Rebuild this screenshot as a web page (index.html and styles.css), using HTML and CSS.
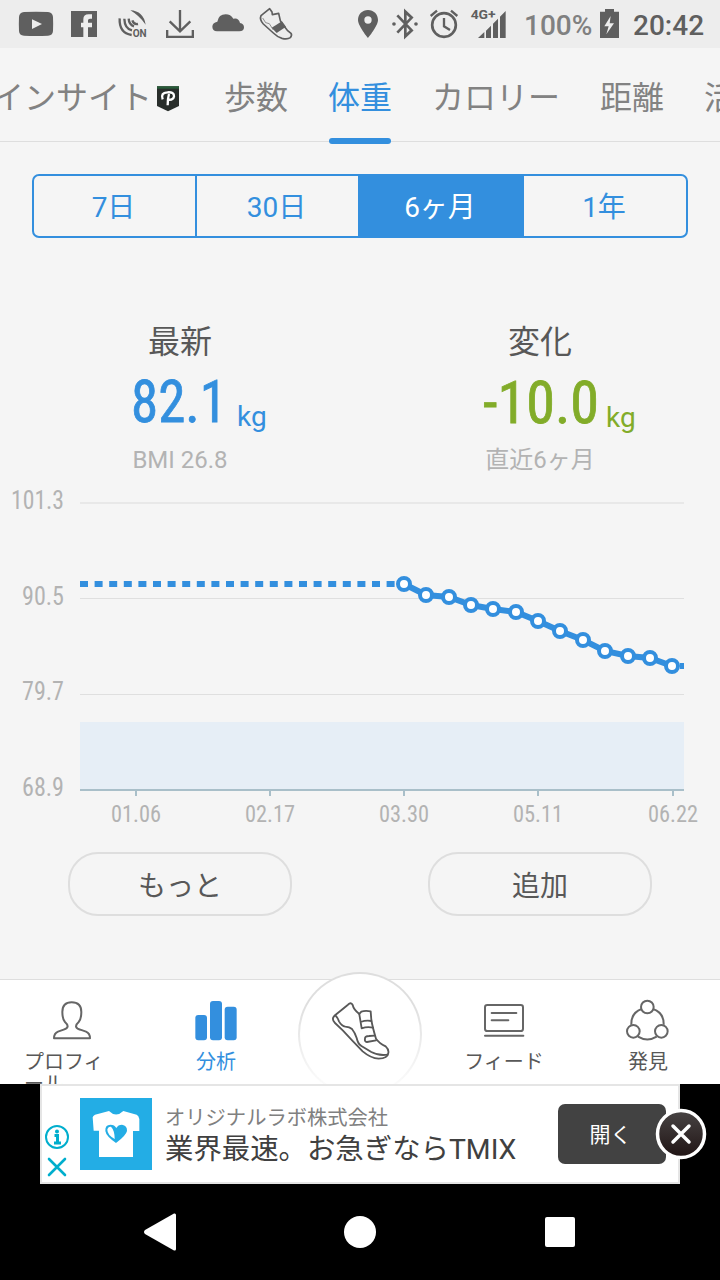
FILE: index.html
```html
<!DOCTYPE html>
<html lang="ja">
<head>
    <meta charset="UTF-8">
    <meta name="viewport" content="width=device-width, initial-scale=1.0">
    <title>体重</title>
    <link rel="stylesheet" href="styles.css">
</head>
<body>
    <!-- ステータスバー -->
    <header class="status">
        <svg class="ic" width="48" height="48" viewBox="36 0 144 144">
            <path d="M72 36Q108 34 144 36Q158 37 159 51Q160 72 159 93Q158 107 144 107Q108 109 72 107Q58 107 57 93Q56 72 57 51Q58 37 72 36Z"/>
            <path d="M96 58L126 72L96 87Z" fill="#ededed"/>
        </svg>
        <svg class="ic" width="48" height="48" viewBox="180 0 144 144">
            <path d="M213 33H291V111H264V82H276V68H264V61Q264 56 270 56H276V43H266Q250 43 250 58V68H243V82H250V111H213Z"/>
        </svg>
        <svg class="ic" width="48" height="48" viewBox="324 0 144 144">
            <path d="M391 31Q430 33 437 74Q418 47 391 31Z"/>
            <g fill="none" stroke="#5f5f5f" stroke-width="7">
                <path d="M359 55Q357 99 395 105"/>
                <path d="M373 56Q374 86 396 91"/>
                <path d="M386 56Q387 74 402 79"/>
                <path d="M397 61Q402 75 414 72"/>
            </g>
            <text x="398" y="111" font-size="33" font-weight="700" textLength="42" lengthAdjust="spacingAndGlyphs">ON</text>
        </svg>
        <svg class="ic" width="48" height="48" viewBox="468 0 144 144">
            <path d="M498 90H505V107H575V90H582V114H498Z"/>
            <path d="M540 30V92M509 64L540 94L571 64" fill="none" stroke="#5f5f5f" stroke-width="7"/>
        </svg>
        <svg class="ic" width="48" height="48" viewBox="612 0 144 144">
            <path d="M651 94Q637 92 637 80Q637 68 652 65Q656 43 677 43Q692 43 700 56Q716 52 720 69Q732 71 732 82Q732 94 718 94Z"/>
        </svg>
        <svg class="ic" width="48" height="48" viewBox="756 0 144 144">
            <path d="M783 47L809 26L816 36L817 44L836 40L841 62L849 74L862 91L873 100Q877 106 871 113Q862 119 846 115Q832 111 820 99L790 72Q778 59 783 47Z" fill="none" stroke="#5f5f5f" stroke-width="5" stroke-linejoin="round"/>
            <path d="M788 54L797 68L808 71L820 90" fill="none" stroke="#5f5f5f" stroke-width="2"/>
            <path d="M815 83L846 64L858 80L830 99Z"/>
        </svg>
        <svg class="ic first" width="36" height="48" viewBox="-30 0 108 144">
            <path fill-rule="evenodd" d="M24 30C41 30 54 43 54 60C54 78 24 114 24 114C24 114 -6 78 -6 60C-6 43 7 30 24 30ZM24 49A11 11 0 1 0 24 71A11 11 0 1 0 24 49Z"/>
        </svg>
        <svg class="ic" width="40" height="48" viewBox="78 0 120 144">
            <path d="M112 46L155 91L136 109V35L155 53L112 98" fill="none" stroke="#5f5f5f" stroke-width="8"/>
            <circle cx="102" cy="72" r="5.500"/><circle cx="168" cy="72" r="5.500"/>
        </svg>
        <svg class="ic" width="38" height="48" viewBox="198 0 114 144">
            <circle cx="252" cy="75" r="35.500" fill="none" stroke="#5f5f5f" stroke-width="8"/>
            <path d="M252 54V79L270 90M212 48L231 32M292 48L273 32" fill="none" stroke="#5f5f5f" stroke-width="7"/>
        </svg>
        <svg class="ic" width="48" height="48" viewBox="312 0 144 144">
            <path d="M354 114L373 96V114ZM378 92L393 77V114H378ZM399 71L414 56V114H399ZM420 50L437 33V114H420Z"/>
            <text x="332" y="57" font-size="41" font-weight="700" textLength="75" lengthAdjust="spacingAndGlyphs">4G+</text>
        </svg>
        <span class="percent">100%</span>
        <svg class="ic" width="20" height="48" viewBox="720 0 60 144">
            <path d="M735 27H762V35H777V114H720V35H735Z"/>
            <path d="M752 48L733 79H746L739 103L762 70H749Z" fill="#ededed"/>
        </svg>
        <span class="time">20:42</span>
    </header>

    <!-- タブ -->
    <nav class="tabs">
        <span class="tab">インサイト<svg class="badge" width="32" height="32" viewBox="456 245 96 96"><path d="M471 258H537V317L504 333L471 317Z" fill="#292e2b"/><path d="M471 258H537V265H471Z" fill="#285c39"/><path d="M488 297Q481 277 502 276Q523 274 522 288Q520 300 504 298M507 281Q503 294 503 315" fill="none" stroke="#fff" stroke-width="7"/></svg></span>
        <span class="tab">歩数</span>
        <span class="tab active">体重</span>
        <span class="tab">カロリー</span>
        <span class="tab">距離</span>
        <span class="tab">活動</span>
    </nav>

    <main>
        <div class="segment">
            <button>7日</button>
            <button>30日</button>
            <button class="on">6ヶ月</button>
            <button>1年</button>
        </div>

        <section class="stats">
            <div class="stat">
                <h2>最新</h2>
                <svg class="value blue" width="360" height="72" viewBox="0 0 360 72">
                    <text class="num" x="131" y="55" textLength="96" lengthAdjust="spacingAndGlyphs">82.1</text>
                    <text class="unit" x="237" y="59">kg</text>
                </svg>
                <p>BMI 26.8</p>
            </div>
            <div class="stat">
                <h2>変化</h2>
                <svg class="value green" width="360" height="72" viewBox="0 0 360 72">
                    <text class="num" x="123" y="56" textLength="116" lengthAdjust="spacingAndGlyphs">-10.0</text>
                    <text class="unit" x="246" y="60">kg</text>
                </svg>
                <p>直近6ヶ月</p>
            </div>
        </section>

        <!-- 体重グラフ -->
        <svg class="chart" width="720" height="350" viewBox="0 0 720 350">
            <rect x="80" y="242" width="604" height="67" fill="#e6eef6"/>
            <rect x="80" y="22" width="604" height="2" fill="#e8e8e8"/>
            <rect x="80" y="118" width="604" height="1" fill="#dfdfdf"/>
            <rect x="80" y="214" width="604" height="1" fill="#dfdfdf"/>
            <path d="M80 310H684M136 311V316M270 311V316M404 311V316M538 311V316M673 311V316" stroke="#a9bfc9" stroke-width="2"/>
            <g class="ylabel">
                <text x="11" y="29" textLength="53" lengthAdjust="spacingAndGlyphs">101.3</text>
                <text x="22" y="125" textLength="42" lengthAdjust="spacingAndGlyphs">90.5</text>
                <text x="22" y="220" textLength="42" lengthAdjust="spacingAndGlyphs">79.7</text>
                <text x="22" y="316" textLength="42" lengthAdjust="spacingAndGlyphs">68.9</text>
            </g>
            <g class="xlabel">
                <text x="111" y="342" textLength="50" lengthAdjust="spacingAndGlyphs">01.06</text>
                <text x="245" y="342" textLength="50" lengthAdjust="spacingAndGlyphs">02.17</text>
                <text x="379" y="342" textLength="50" lengthAdjust="spacingAndGlyphs">03.30</text>
                <text x="513" y="342" textLength="50" lengthAdjust="spacingAndGlyphs">05.11</text>
                <text x="648" y="342" textLength="50" lengthAdjust="spacingAndGlyphs">06.22</text>
            </g>
            <g class="line">
                <path d="M80 104H400" stroke-dasharray="8 6.6"/>
                <path d="M680 186H684"/>
                <polyline points="404,104 426,115 449,117 471,125 493,129 516,132 538,141 560,151 583,160 605,171 628,176 650,178 672,186"/>
            </g>
            <g class="dots">
                <circle cx="404" cy="104" r="6"/>
                <circle cx="426" cy="115" r="6"/>
                <circle cx="449" cy="117" r="6"/>
                <circle cx="471" cy="125" r="6"/>
                <circle cx="493" cy="129" r="6"/>
                <circle cx="516" cy="132" r="6"/>
                <circle cx="538" cy="141" r="6"/>
                <circle cx="560" cy="151" r="6"/>
                <circle cx="583" cy="160" r="6"/>
                <circle cx="605" cy="171" r="6"/>
                <circle cx="628" cy="176" r="6"/>
                <circle cx="650" cy="178" r="6"/>
                <circle cx="672" cy="186" r="6"/>
            </g>
        </svg>

        <div class="actions">
            <button>もっと</button>
            <button>追加</button>
        </div>
    </main>

    <!-- 下部メニュー -->
    <nav class="menu">
        <div class="item">
            <svg width="48" height="48" viewBox="144 82 144 144" fill="none" stroke="#666" stroke-width="6" stroke-linejoin="round">
                <path d="M203 170Q203 164 195 157Q187 148 187 127Q187 98 215 98Q244 98 244 127Q244 148 236 157Q228 164 228 170Q229 177 241 180L258 186Q270 191 270 206H162Q162 191 174 186L191 180Q203 176 203 170Z"/>
            </svg>
            <span>プロフィール</span>
        </div>
        <div class="item active">
            <svg width="48" height="48" viewBox="576 82 144 144" fill="#338fde">
                <rect x="586" y="136" width="35" height="76" rx="9"/>
                <rect x="630" y="94" width="36" height="118" rx="9"/>
                <rect x="674" y="111" width="36" height="101" rx="9"/>
            </svg>
            <span>分析</span>
        </div>
        <div class="item">
            <div class="start">
                <svg width="62" height="62" viewBox="120 105 186 186" fill="none" stroke="#585858" stroke-width="5.500" stroke-linejoin="round" stroke-linecap="round">
                    <path d="M139 150L177 119Q186 110 191 120Q194 134 211 147L217 140Q228 136 245 139L247 165Q251 188 261 221Q270 234 290 244Q300 253 298 264Q296 280 269 281Q246 280 221 259L190 227L162 197L138 174Q125 161 139 150Z"/>
                    <path d="M139 151Q146 158 150 169Q158 183 169 185Q182 186 189 192Q198 203 203 219Q207 237 216 242L247 261Q268 273 296 269"/>
                    <path d="M211 148L218 190Q235 184 252 188M215 171Q231 165 247 168M261 226Q245 229 234 231Q226 229 228 222Q227 213 240 213L257 212"/>
                </svg>
            </div>
        </div>
        <div class="item">
            <svg width="48" height="48" viewBox="150 82 144 144" fill="none" stroke="#666" stroke-width="6" stroke-linecap="round">
                <rect x="165" y="106" width="114" height="78" rx="7"/>
                <path d="M185 130H259M185 152H235M165 198H280"/>
            </svg>
            <span>フィード</span>
        </div>
        <div class="item">
            <svg width="48" height="48" viewBox="582 82 144 144" fill="none" stroke="#666" stroke-width="6">
                <circle cx="652" cy="112" r="19"/>
                <circle cx="610" cy="185" r="19"/>
                <circle cx="694" cy="185" r="19"/>
                <path d="M635 118Q603 129 604 165M669 118Q702 129 701 165M624 201Q652 218 680 201"/>
            </svg>
            <span>発見</span>
        </div>
    </nav>

    <!-- 広告 -->
    <aside class="ad">
        <div class="adbox">
            <div class="adchoice">
                <svg width="26" height="56" viewBox="0 0 26 56" fill="none" stroke="#00aecd" stroke-width="2">
                    <circle cx="13" cy="13" r="11"/>
                    <path d="M10.500 11.500H13.500V19M10 19H17" stroke-width="3"/>
                    <circle cx="13" cy="7.500" r="1"/>
                    <path d="M5 35L21 51M21 35L5 51" stroke-width="2.600" stroke-linecap="round"/>
                </svg>
            </div>
            <svg class="logo" width="72" height="72" viewBox="150 54 216 216">
                <rect x="150" y="54" width="216" height="216" fill="#23ade5"/>
                <path d="M237 93Q258 114 280 93L320 104Q326 107 328 117V153H309V231H207V152H191L188 112Q189 107 195 104Z" fill="#fff"/>
                <path d="M258 189Q228 168 226 153Q225 134 241 134Q254 134 259 144Q264 134 276 134Q292 136 291 153Q288 167 258 189Z" fill="#23ade5"/>
                <path d="M254 177Q232 164 232 149Q234 139 243 140Q254 151 254 177Z" fill="#fff"/>
            </svg>
            <div class="adtext">
                <small>オリジナルラボ株式会社</small>
                <strong>業界最速。お急ぎならTMIX</strong>
            </div>
            <button class="open">開く</button>
            <svg class="close" width="56" height="56" viewBox="0 0 56 56">
                <defs>
                    <linearGradient id="cg" x1="0" y1="0" x2="0" y2="1">
                        <stop offset="0" stop-color="#484444"/>
                        <stop offset="1" stop-color="#201414"/>
                    </linearGradient>
                </defs>
                <circle cx="28" cy="28" r="23.500" fill="url(#cg)" stroke="#fff" stroke-width="3.500"/>
                <path d="M20 20L36 36M36 20L20 36" stroke="#fff" stroke-width="3.500" stroke-linecap="round"/>
            </svg>
        </div>
    </aside>

    <!-- ナビゲーションバー -->
    <footer class="softkeys">
        <svg width="40" height="40" viewBox="0 0 40 40" fill="#fff"><path d="M5 18L34 1.500Q36 1 36 3V37Q36 39 34 38.500L5 22Q3 20 5 18Z"/></svg>
        <svg width="40" height="40" viewBox="0 0 40 40" fill="#fff"><circle cx="20" cy="20" r="16"/></svg>
        <svg width="40" height="40" viewBox="0 0 40 40" fill="#fff"><rect x="5" y="5" width="30" height="30" rx="2"/></svg>
    </footer>
</body>
</html>
```

FILE: styles.css
```css
* {
    box-sizing: border-box;
}
body {
    margin: 0;
    width: 720px;
    height: 1280px;
    overflow: hidden;
    display: flex;
    flex-direction: column;
    background-color: #f5f5f5;
    color: #585858;
    font-family: Roboto, "Noto Sans CJK JP", sans-serif;
}
svg {
    display: block;
    flex: none;
}
button {
    padding: 0;
    background: none;
    font-family: inherit;
    color: inherit;
}
.status {
    display: flex;
    align-items: center;
    height: 48px;
    padding-left: 12px;
    background-color: #ededed;
    color: #5f5f5f;
    white-space: nowrap;
}
.ic {
    fill: #5f5f5f;
}
.ic.first {
    margin-left: 50px;
}
.percent {
    width: 88px;
    padding: 3px 0 0 12px;
    font-size: 28px;
    color: #808080;
    font-weight: 500;
}
.time {
    padding: 3px 0 0 13px;
    font-size: 28px;
    font-weight: 500;
}
.tabs {
    display: flex;
    gap: 40px;
    height: 94px;
    padding-top: 27px;
    border-bottom: 1px solid #dedede;
    font-size: 32px;
    line-height: 46px;
    color: #828282;
    white-space: nowrap;
}
.tab {
    display: flex;
    align-items: center;
    height: 46px;
    flex: none;
}
.tab:first-child {
    margin-left: -8px;
}
.tab.active {
    position: relative;
    color: #338fde;
}
.tab.active::after {
    content: "";
    position: absolute;
    left: 1px;
    right: 1px;
    top: 63px;
    height: 6px;
    border-radius: 3px;
    background-color: #338fde;
}
.segment {
    display: grid;
    grid-template-columns: 161px 163px 164px 164px;
    height: 64px;
    margin: 32px 32px 0;
    border: 2px solid #338fde;
    border-radius: 7px;
    overflow: hidden;
}
.segment button {
    padding: 0 2px 2px 0;
    border: none;
    border-left: 2px solid #338fde;
    font-size: 28px;
    color: #338fde;
}
.segment button:first-child {
    border-left: none;
}
.segment .on {
    background-color: #338fde;
    color: #fff;
}
.stats {
    display: flex;
    height: 242px;
    padding-top: 81px;
}
.stat {
    width: 360px;
    text-align: center;
}
.stat h2 {
    margin: 0;
    font-size: 32px;
    line-height: 46px;
    font-weight: 400;
}
.stat p {
    width: 360px;
    margin: 5px 0 0;
    font-size: 24px;
    line-height: 33px;
    color: #b3b3b3;
}
.value {
    margin-top: 2px;
}
.blue {
    fill: #338fde;
    stroke: #338fde;
}
.green {
    fill: #82ac29;
    stroke: #82ac29;
}
.num {
    font-family: "Roboto Condensed", Roboto, sans-serif;
    font-size: 60px;
    stroke-width: 0.8;
}
.unit {
    font-size: 28px;
    stroke: none;
}
.ylabel, .xlabel {
    font-family: "Roboto Condensed", Roboto, sans-serif;
    fill: #b3b3b3;
}
.ylabel {
    font-size: 26px;
}
.xlabel {
    font-size: 24px;
}
.line {
    fill: none;
    stroke: #338fde;
    stroke-width: 6;
}
.dots {
    fill: #fff;
    stroke: #338fde;
    stroke-width: 4;
}
.actions {
    display: flex;
    justify-content: space-between;
    padding: 22px 68px 0;
}
.actions button {
    width: 224px;
    height: 64px;
    border: 2px solid #dedede;
    border-radius: 30px;
    font-size: 28px;
}
.menu {
    display: grid;
    grid-template-columns: repeat(5, 144px);
    height: 105px;
    margin-top: 63px;
    border-top: 1px solid #dedede;
    background-color: #fff;
}
.item {
    display: flex;
    flex-direction: column;
    align-items: center;
    height: 104px;
    padding-top: 17px;
    font-size: 20px;
    line-height: 22px;
}
.item span {
    max-width: 96px;
    margin-top: 6px;
    line-break: anywhere;
}
.item.active {
    color: #338fde;
}
/* 円の枠線は下に向かって薄くなる */
.start {
    width: 124px;
    height: 124px;
    flex: none;
    margin-top: -25px;
    padding: 26px 0 0 29px;
    border: 2px solid transparent;
    border-radius: 50%;
    background: linear-gradient(#fff, #fff) padding-box, linear-gradient(#dedede 25%, #fff 100%) border-box;
}
.ad {
    position: relative;
    height: 100px;
    padding: 0 40px;
    background-color: #000;
}
.adbox {
    display: flex;
    height: 100px;
    border: 2px solid #e5e5e5;
    background-color: #fff;
}
.adchoice {
    width: 38px;
    padding: 38px 0 0 2px;
}
.logo {
    margin-top: 12px;
}
.adtext {
    width: 406px;
    padding: 18px 0 0 13px;
    white-space: nowrap;
}
.adtext small {
    display: block;
    font-size: 20.3px;
    line-height: 29px;
    color: #808080;
}
.adtext strong {
    display: block;
    font-size: 28.4px;
    line-height: 33px;
    font-weight: 400;
    color: #404040;
}
.open {
    width: 108px;
    height: 60px;
    margin-top: 18px;
    padding: 0 3px 2px 0;
    border: none;
    border-radius: 7px;
    background-color: #424242;
    color: #fff;
    font-size: 21px;
}
.close {
    position: absolute;
    left: 653px;
    top: 22px;
}
.softkeys {
    display: flex;
    justify-content: space-between;
    align-items: flex-start;
    height: 96px;
    padding: 28px 140px 0;
    background-color: #000;
}
```
